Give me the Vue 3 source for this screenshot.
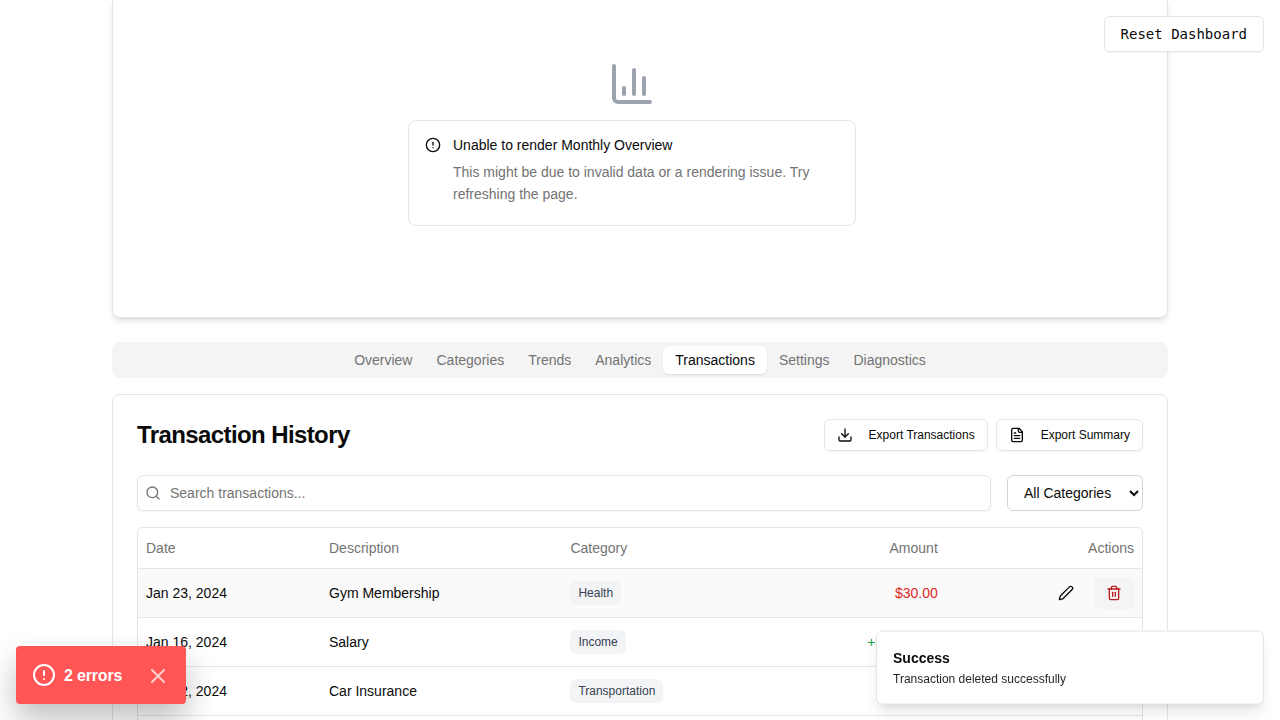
<script setup>
const tabs = ['Overview', 'Categories', 'Trends', 'Analytics', 'Transactions', 'Settings', 'Diagnostics']
const activeTab = 'Transactions'
const rows = [
  { date: 'Jan 23, 2024', description: 'Gym Membership', category: 'Health', amount: '$30.00', active: true },
  { date: 'Jan 16, 2024', description: 'Salary', category: 'Income', amount: '+$3,000.00', income: true },
  { date: 'Jan 12, 2024', description: 'Car Insurance', category: 'Transportation', amount: '' },
]
</script>

<template>
  <div class="page">
    <main class="container">
      <section class="chart-card">
        <div class="chart-area">
          <svg class="ico chart-icon" viewBox="0 0 24 24">
            <path d="M3 3v16a2 2 0 0 0 2 2h16" /><path d="M18 17V9" /><path d="M13 17V5" /><path d="M8 17v-3" />
          </svg>
          <div class="alert">
            <svg class="ico" viewBox="0 0 24 24">
              <circle cx="12" cy="12" r="10" /><path d="M12 8v4" /><path d="M12 16h.01" />
            </svg>
            <div>
              <div class="alert-title">Unable to render Monthly Overview</div>
              <div class="alert-text">This might be due to invalid data or a rendering issue. Try refreshing the page.</div>
            </div>
          </div>
        </div>
      </section>

      <nav class="tabs">
        <button v-for="t in tabs" :key="t" class="tab" :class="{ active: t === activeTab }">{{ t }}</button>
      </nav>

      <section class="history">
        <header class="history-head">
          <h2>Transaction History</h2>
          <div class="exports">
            <button class="export">
              <svg class="ico" viewBox="0 0 24 24">
                <path d="M21 15v4a2 2 0 0 1-2 2H5a2 2 0 0 1-2-2v-4" /><path d="m7 10 5 5 5-5" /><path d="M12 15V3" />
              </svg>
              Export Transactions
            </button>
            <button class="export">
              <svg class="ico" viewBox="0 0 24 24">
                <path d="M15 2H6a2 2 0 0 0-2 2v16a2 2 0 0 0 2 2h12a2 2 0 0 0 2-2V7Z" /><path d="M14 2v4a2 2 0 0 0 2 2h4" />
                <path d="M10 9H8" /><path d="M16 13H8" /><path d="M16 17H8" />
              </svg>
              Export Summary
            </button>
          </div>
        </header>

        <div class="filters">
          <div class="search">
            <svg class="ico" viewBox="0 0 24 24"><circle cx="11" cy="11" r="8" /><path d="m21 21-4.3-4.3" /></svg>
            <input type="text" placeholder="Search transactions..." />
          </div>
          <select class="select"><option>All Categories</option></select>
        </div>

        <div class="table">
          <div class="row head">
            <div>Date</div><div>Description</div><div>Category</div><div class="right">Amount</div><div class="right">Actions</div>
          </div>
          <div v-for="r in rows" :key="r.date" class="row" :class="{ hovered: r.active }">
            <div>{{ r.date }}</div>
            <div>{{ r.description }}</div>
            <div><span class="badge">{{ r.category }}</span></div>
            <div class="right" :class="r.income ? 'income' : 'expense'">{{ r.amount }}</div>
            <div class="actions">
              <button class="action">
                <svg class="ico" viewBox="0 0 24 24">
                  <path d="M21.174 6.812a1 1 0 0 0-3.986-3.987L3.842 16.174a2 2 0 0 0-.5.83l-1.321 4.352a.5.5 0 0 0 .623.622l4.353-1.32a2 2 0 0 0 .83-.497z" />
                </svg>
              </button>
              <button class="action delete">
                <svg class="ico" viewBox="0 0 24 24">
                  <path d="M3 6h18" /><path d="M19 6v14c0 1-1 2-2 2H7c-1 0-2-1-2-2V6" /><path d="M8 6V4c0-1 1-2 2-2h4c1 0 2 1 2 2v2" />
                  <path d="M10 11v6" /><path d="M14 11v6" />
                </svg>
              </button>
            </div>
          </div>
        </div>
      </section>
    </main>

    <button class="reset">Reset Dashboard</button>

    <div class="toast">
      <div class="toast-title">Success</div>
      <div class="toast-text">Transaction deleted successfully</div>
    </div>

    <div class="errors">
      <svg class="ico" viewBox="0 0 24 24">
        <circle cx="12" cy="12" r="10" /><path d="M12 8v4" /><path d="M12 16h.01" />
      </svg>
      <span>2 errors</span>
      <svg class="ico close" viewBox="0 0 24 24"><path d="M18 6 6 18" /><path d="m6 6 12 12" /></svg>
    </div>
  </div>
</template>

<style>
body {
  margin: 0;
  background: #fff;
}
</style>

<style scoped>
.page {
  position: relative;
  height: 720px;
  overflow: hidden;
  font: 14px/20px "Liberation Sans", Arial, sans-serif;
  color: #0a0a0a;
}
.page * { box-sizing: border-box; }
button, input, select { font: inherit; color: inherit; }
button { border: 0; background: none; padding: 0; margin: 0; }
.ico {
  width: 16px;
  height: 16px;
  flex: none;
  fill: none;
  stroke: currentColor;
  stroke-width: 2;
  stroke-linecap: round;
  stroke-linejoin: round;
}
.container {
  width: 1056px;
  margin: 0 auto;
  display: flex;
  flex-direction: column;
}
.chart-card {
  height: 318px;
  border: 1px solid #e5e5e5;
  border-top: 0;
  border-radius: 0 0 8px 8px;
  padding: 0 24px 24px 8px;
  display: flex;
  align-items: flex-end;
  box-shadow: 0 4px 6px -1px rgba(0, 0, 0, .1), 0 2px 4px -2px rgba(0, 0, 0, .1);
}
.chart-area {
  width: 100%;
  height: 300px;
  display: flex;
  flex-direction: column;
  align-items: center;
  justify-content: center;
  gap: 12px;
}
.chart-icon { width: 48px; height: 48px; color: #9ca3af; }
.alert {
  width: 448px;
  height: 106px;
  border: 1px solid #e5e5e5;
  border-radius: 8px;
  padding: 16px;
  display: flex;
  gap: 12px;
}
.alert-title { line-height: 16px; }
.alert-text { margin-top: 8px; line-height: 22.4px; color: #737373; }
.tabs {
  margin-top: 24px;
  height: 36px;
  padding: 4px;
  border-radius: 8px;
  background: #f4f4f4;
  display: flex;
  justify-content: center;
}
.tab { padding: 0 12px; border-radius: 6px; color: #737373; }
.tab.active { background: #fff; color: #0a0a0a; box-shadow: 0 1px 2px rgba(0, 0, 0, .1); }
.history {
  margin-top: 16px;
  border: 1px solid #e5e5e5;
  border-radius: 8px;
  padding: 24px;
}
.history-head { display: flex; align-items: center; justify-content: space-between; height: 32px; }
h2 { margin: 0; font-size: 24px; line-height: 32px; font-weight: 700; letter-spacing: -0.6px; }
.exports { display: flex; gap: 8px; }
.export {
  height: 32px;
  padding: 0 12px;
  border: 1px solid #e5e5e5;
  border-radius: 6px;
  display: flex;
  align-items: center;
  gap: 16px;
  font-size: 12px;
  box-shadow: 0 1px 2px rgba(0, 0, 0, .05);
}
.filters { display: flex; gap: 16px; margin-top: 24px; }
.search {
  flex: 1;
  height: 36px;
  border: 1px solid #e5e5e5;
  border-radius: 6px;
  padding: 0 8px 0 7px;
  display: flex;
  align-items: center;
  gap: 9px;
  color: #737373;
  box-shadow: 0 1px 2px rgba(0, 0, 0, .05);
}
.search input { border: 0; outline: 0; padding: 0; flex: 1; background: none; }
.search input::placeholder { color: #737373; opacity: 1; }
.select {
  width: 136px;
  height: 36px;
  margin: 0;
  padding: 0 12px;
  border: 1px solid #d1d5db;
  border-radius: 6px;
  background: #fff;
}
.table { margin-top: 16px; height: 300px; border: 1px solid #e5e5e5; border-radius: 6px; overflow: hidden; }
.row {
  height: 49px;
  display: grid;
  grid-template-columns: 183px 241.4px 180px 203.4px 196.2px;
  align-items: center;
  border-bottom: 1px solid #e5e5e5;
}
.row > div { padding: 0 8px; }
.row.head { height: 41px; color: #737373; }
.hovered { background: #fafafa; }
.right { text-align: right; }
.expense { color: #dc2626; }
.income { color: #16a34a; }
.badge {
  display: inline-block;
  padding: 4px 8px;
  border-radius: 6px;
  background: #f3f4f6;
  color: #374151;
  font-size: 12px;
  line-height: 16px;
  vertical-align: middle;
}
.actions { display: flex; justify-content: flex-end; gap: 8px; }
.action { width: 40px; height: 32px; border-radius: 6px; display: flex; align-items: center; justify-content: center; }
.action.delete { color: #b91c1c; }
.hovered .action.delete { background: #f4f4f4; }
.reset {
  position: absolute;
  top: 16px;
  right: 16px;
  height: 36px;
  padding: 0 16px;
  border: 1px solid #e5e5e5;
  border-radius: 6px;
  background: #fff;
  font-family: "DejaVu Sans Mono", monospace;
  box-shadow: 0 1px 2px rgba(0, 0, 0, .05);
}
.toast {
  position: absolute;
  right: 16px;
  bottom: 16px;
  width: 388px;
  height: 74px;
  padding: 16px;
  border: 1px solid #e5e5e5;
  border-radius: 6px;
  background: #fff;
  transform: translateY(.5px);
  will-change: transform;
  box-shadow: 0 10px 15px -3px rgba(0, 0, 0, .1), 0 4px 6px -4px rgba(0, 0, 0, .1);
}
.toast-title { font-weight: 700; }
.toast-text { margin-top: 3px; font-size: 12px; line-height: 16px; color: #262626; }
.errors {
  position: absolute;
  left: 16px;
  bottom: 16px;
  width: 170px;
  height: 58px;
  padding: 0 16px;
  border-radius: 4px;
  background: #ff5555;
  color: #fff;
  display: flex;
  align-items: center;
  font-size: 16px;
  font-weight: 700;
  box-shadow: 0 16px 32px rgba(0, 0, 0, .25);
}
.errors .ico { width: 24px; height: 24px; }
.errors span { margin-left: 8px; white-space: nowrap; letter-spacing: -0.18px; position: relative; top: 1px; }
.errors .close { margin-left: auto; opacity: .7; position: relative; top: 1px; }
</style>
